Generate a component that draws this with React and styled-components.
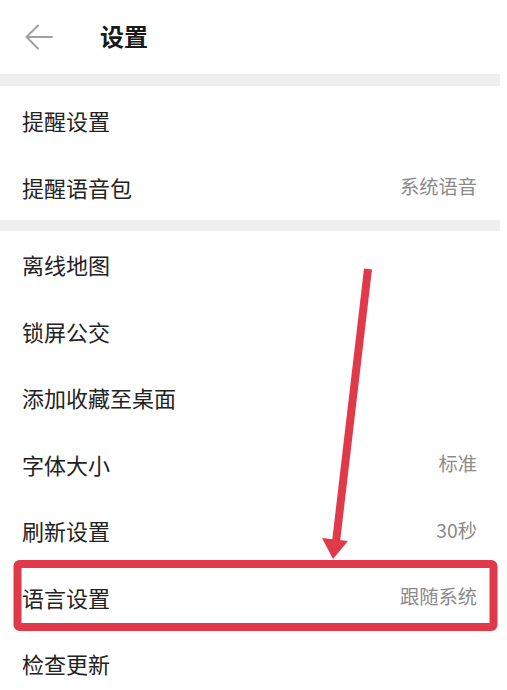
import React from "react";
import styled, { createGlobalStyle } from "styled-components";

const Global = createGlobalStyle`
  html, body { margin: 0; padding: 0; background: #ffffff; }
  body { font-family: "Noto Sans CJK SC", "Noto Sans", sans-serif; }
`;

const Page = styled.div`
  position: relative;
  width: 500px;
  background: #ffffff;
  overflow: hidden;
  height: 690px;
`;

const Header = styled.div`
  height: 74px;
  display: flex;
  align-items: center;
  padding-left: 25px;
  gap: 47px;
`;

const Title = styled.div`
  font-size: 24px;
  font-weight: 700;
  color: #1a1a1a;
  line-height: 1;
  margin-top: -2px;
`;

const Band = styled.div`
  height: ${(p) => p.$h}px;
  background: #efefef;
`;

const Row = styled.div`
  height: ${(p) => p.$h}px;
  display: flex;
  align-items: center;
  justify-content: space-between;
  padding: 0 23px 0 22px;
`;

const Label = styled.span`
  font-size: 22px;
  color: #222222;
  line-height: 1;
`;

const Value = styled.span`
  font-size: 19.3px;
  color: #8a8a8a;
  line-height: 1;
`;

const Overlay = styled.svg`
  position: absolute;
  left: 0;
  top: 0;
  pointer-events: none;
`;

const Back = () => (
  <svg width="28" height="26" viewBox="0 0 28 26" fill="none">
    <path d="M27 13H2M13 1.5L1.5 13L13 24.5" stroke="#a0a0a0" strokeWidth="2" strokeLinecap="round" strokeLinejoin="round" />
  </svg>
);

const section1 = [
  ["提醒设置", ""],
  ["提醒语音包", "系统语音"],
];
const section2 = [
  ["离线地图", ""],
  ["锁屏公交", ""],
  ["添加收藏至桌面", ""],
  ["字体大小", "标准"],
  ["刷新设置", "30秒"],
  ["语言设置", "跟随系统"],
  ["检查更新", ""],
];

export default function App() {
  return (
    <>
      <Global />
      <Page>
        <Header>
          <Back />
          <Title>设置</Title>
        </Header>
        <Band $h={12} />
        {section1.map(([l, v]) => (
          <Row key={l} $h={67}>
            <Label>{l}</Label>
            {v && <Value>{v}</Value>}
          </Row>
        ))}
        <Band $h={11} />
        {section2.map(([l, v]) => (
          <Row key={l} $h={66.5}>
            <Label>{l}</Label>
            {v && <Value>{v}</Value>}
          </Row>
        ))}
        <Overlay width="507" height="690" viewBox="0 0 507 690">
          <rect x="17.5" y="564" width="476" height="63" rx="2" fill="none" stroke="#e0394a" strokeWidth="8" />
          <line x1="368" y1="269" x2="336" y2="542" stroke="#e0394a" strokeWidth="8" />
          <polygon points="322,538 348,541 333,559" fill="#e0394a" />
        </Overlay>
      </Page>
    </>
  );
}
